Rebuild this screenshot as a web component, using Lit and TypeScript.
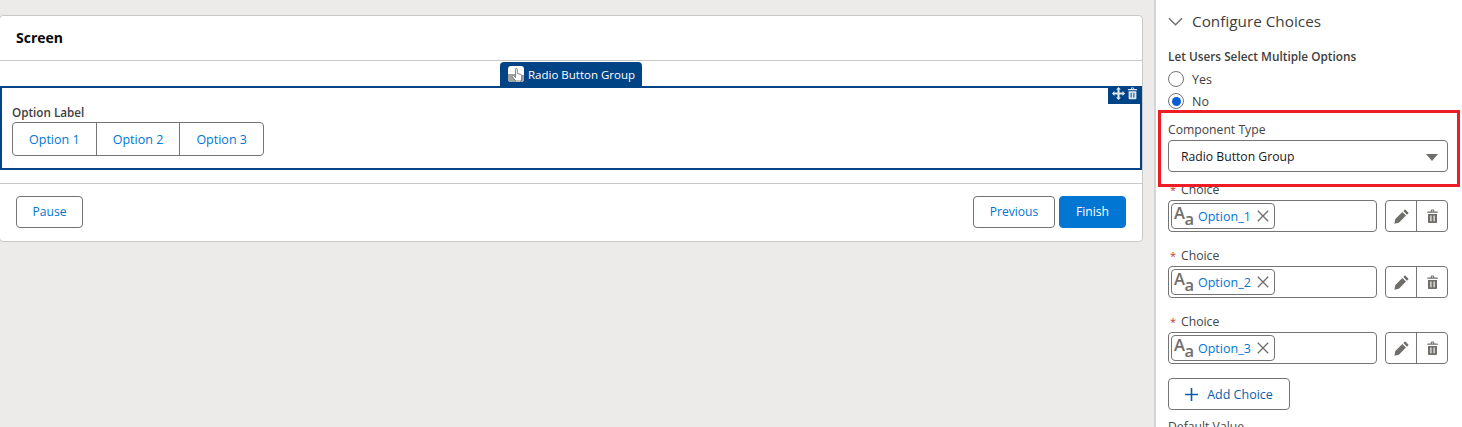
import { LitElement, html, css, svg } from 'lit';
import { customElement } from 'lit/decorators.js';

const trash = (fill: string) => svg`<path fill=${fill} d="M3 2.6h3.2V1.4c0-.5.4-.9.9-.9h1.8c.5 0 .9.4.9.9v1.2H13c.4 0 .7.3.7.7v.7H2.3v-.7c0-.4.3-.7.7-.7zM7.3 1.6v1h1.4v-1zM3.2 5.2h9.6v8.6c0 .7-.5 1.2-1.2 1.2H4.400c-.7 0-1.200-.5-1.200-1.200zM5.700 7v6h1.200V7zm3.400 0v6h1.200V7z"/>`;

@customElement('app-root')
export class AppRoot extends LitElement {
  static styles = css`
    :host {
      display: block;
      height: 427px;
      overflow: hidden;
      font-family: 'Open Sans', 'Noto Sans', sans-serif;
      font-size: 12.5px;
      color: #3e3e3c;
    }

    .page {
      display: flex;
      height: 427px;
      background: #ecebea;
    }

    .main {
      flex: none;
      width: 1154px;
      padding-top: 15px;
      box-sizing: border-box;
    }

    .card {
      margin: 0 11px 0 -1px;
      height: 227px;
      box-sizing: border-box;
      background: #fff;
      border: 1px solid #c9c9c9;
      border-radius: 4px;
      display: flex;
      flex-direction: column;
    }

    .card__header {
      height: 45px;
      flex: none;
      box-sizing: border-box;
      padding: 0 0 1px 16px;
      display: flex;
      align-items: center;
      font-size: 14px;
      font-weight: 700;
      color: #080707;
      border-bottom: 1px solid #c9c9c9;
    }

    .canvas {
      position: relative;
      height: 123px;
      flex: none;
      box-sizing: border-box;
      padding-top: 25px;
      border-bottom: 1px solid #c9c9c9;
    }

    .tab {
      position: absolute;
      left: 500px;
      top: 1px;
      width: 142px;
      height: 24px;
      box-sizing: border-box;
      padding-left: 8px;
      display: flex;
      align-items: center;
      gap: 4px;
      background: #014486;
      border-radius: 4px 4px 0 0;
      color: #fff;
      font-size: 11.5px;
      white-space: nowrap;
    }

    .tab svg {
      flex: none;
      width: 16px;
      height: 16px;
      border-radius: 3px;
    }

    .selected {
      position: relative;
      height: 84px;
      box-sizing: border-box;
      border: 2px solid #014486;
      padding: 15px 0 0 10px;
    }

    .toolbar {
      position: absolute;
      top: -2px;
      right: -2px;
      width: 34px;
      height: 18px;
      background: #014486;
      display: flex;
      align-items: flex-start;
      justify-content: center;
      gap: 1px;
      padding-top: 1px;
      box-sizing: border-box;
    }

    .toolbar svg {
      width: 13px;
      height: 13px;
    }

    .option-label {
      font-weight: 600;
      font-size: 11.7px;
      line-height: 18px;
      height: 19px;
    }

    .segments {
      display: flex;
      width: 252px;
      height: 34px;
      box-sizing: border-box;
      border: 1px solid #747474;
      border-radius: 4px;
    }

    .segments span {
      flex: 1;
      display: flex;
      align-items: center;
      justify-content: center;
      color: #0176d3;
    }

    .segments span + span {
      border-left: 1px solid #747474;
    }

    .card__footer {
      flex: 1;
      display: flex;
      align-items: center;
      padding: 0 16px 2px;
      gap: 4px;
    }

    .btn {
      height: 32px;
      box-sizing: border-box;
      display: inline-flex;
      align-items: center;
      justify-content: center;
      border: 1px solid #747474;
      border-radius: 4px;
      background: #fff;
      color: #0176d3;
      font-size: 12.1px;
    }

    .btn--pause {
      width: 67px;
      margin-right: auto;
    }

    .btn--prev {
      width: 82px;
    }

    .btn--finish {
      width: 67px;
      background: #0176d3;
      border-color: #0176d3;
      color: #fff;
    }

    .panel {
      flex: 1;
      background: #fff;
      border-left: 2px solid #d4d4d4;
      padding: 0 14px 0 12px;
      box-sizing: border-box;
      min-width: 0;
    }

    .section {
      height: 42px;
      display: flex;
      align-items: center;
      gap: 9px;
      font-size: 15.3px;
      color: #3e3e3c;
    }

    .section svg {
      width: 15px;
      height: 15px;
      flex: none;
    }

    .multi-label {
      font-size: 11.8px;
      font-weight: 600;
      line-height: 18px;
      margin: 5px 0 3px;
    }

    .radio {
      display: flex;
      align-items: center;
      gap: 8px;
      height: 22px;
    }

    .radio i {
      width: 16px;
      height: 16px;
      box-sizing: border-box;
      border: 1px solid #747474;
      border-radius: 50%;
      display: flex;
      align-items: center;
      justify-content: center;
    }

    .radio i.on::after {
      content: '';
      width: 9px;
      height: 9px;
      border-radius: 50%;
      background: #0b5cd5;
    }

    .highlight {
      position: relative;
      margin-top: 7px;
      height: 53px;
    }

    .highlight__frame {
      position: absolute;
      left: -10px;
      right: -12px;
      top: -9px;
      bottom: -15px;
      border: 3px solid #ee1c25;
      pointer-events: none;
    }

    .field-label {
      line-height: 22px;
      height: 21px;
      color: #444;
      font-size: 12.2px;
    }

    .select {
      height: 32px;
      box-sizing: border-box;
      border: 1px solid #747474;
      border-radius: 4px;
      padding: 0 9px 0 12px;
      display: flex;
      align-items: center;
      justify-content: space-between;
      color: #181818;
      font-size: 12.2px;
    }

    .select b {
      width: 0;
      height: 0;
      border-left: 6px solid transparent;
      border-right: 6px solid transparent;
      border-top: 7px solid #706e6b;
      margin-top: 2px;
    }

    .choices {
      margin-top: 9px;
    }

    .choice {
      height: 66px;
    }

    .choice__label {
      line-height: 18px;
      height: 18px;
      padding-left: 2px;
      color: #444;
      margin-bottom: 1px;
      font-size: 12.2px;
    }

    .choice__label em {
      color: #c23934;
      font-style: normal;
      font-size: 11px;
      margin-right: 5px;
    }

    .choice__row {
      display: flex;
      gap: 8px;
    }

    .pick {
      width: 209px;
      height: 32px;
      box-sizing: border-box;
      border: 1px solid #747474;
      border-radius: 4px;
      padding: 2px;
    }

    .pill {
      width: 104px;
      height: 26px;
      box-sizing: border-box;
      border: 1px solid #747474;
      border-radius: 4px;
      display: flex;
      align-items: center;
      color: #0176d3;
    }

    .pill__aa {
      flex: none;
      width: 26px;
      height: 24px;
      overflow: visible;
    }

    .pill__aa text {
      font-family: 'Open Sans', sans-serif;
      font-weight: 600;
      fill: #706e6b;
    }

    .pill__x {
      flex: none;
      width: 12px;
      height: 12px;
      margin-left: auto;
      margin-right: 5px;
    }

    .icons {
      display: flex;
      width: 63px;
      height: 32px;
      box-sizing: border-box;
      border: 1px solid #747474;
      border-radius: 4px;
    }

    .icons span {
      flex: 1;
      display: flex;
      align-items: center;
      justify-content: center;
    }

    .icons span + span {
      border-left: 1px solid #747474;
    }

    .icons svg {
      width: 15px;
      height: 15px;
    }

    .add {
      width: 122px;
      height: 32px;
      box-sizing: border-box;
      margin-top: -1px;
      border: 1px solid #747474;
      border-radius: 4px;
      display: flex;
      align-items: center;
      justify-content: center;
      gap: 9px;
      color: #0b5cab;
    }

    .add svg {
      width: 13px;
      height: 13px;
    }

    .default-label {
      margin-top: 8px;
      line-height: 18px;
      color: #444;
      font-size: 12.2px;
    }
  `;

  renderChoice(name: string) {
    return html`
      <div class="choice">
        <div class="choice__label"><em>*</em>Choice</div>
        <div class="choice__row">
          <div class="pick">
            <div class="pill">
              <svg class="pill__aa" viewBox="0 0 26 24">
                <text x="2" y="15" font-size="16.500">A</text>
                <text x="12.500" y="20.500" font-size="16.500">a</text>
              </svg>
              <span>${name}</span>
              <svg class="pill__x" viewBox="0 0 12 12">
                <path d="M.8.8l10.400 10.400M11.200.8L.8 11.200" stroke="#706e6b" stroke-width="1.300" fill="none" />
              </svg>
            </div>
          </div>
          <div class="icons">
            <span>
              <svg viewBox="0 0 16 16">
                <path fill="#706e6b" d="M12.300.8l2.900 2.900c.3.3.3.7 0 1l-1.400 1.400-3.900-3.900L11.300.8c.3-.3.7-.3 1 0zM8.900 3.100l3.900 3.900-7.600 7.600-4.800 1 1-4.900z" />
              </svg>
            </span>
            <span><svg viewBox="0 0 16 16">${trash('#706e6b')}</svg></span>
          </div>
        </div>
      </div>
    `;
  }

  render() {
    return html`
      <div class="page">
        <div class="main">
          <div class="card">
            <div class="card__header">Screen</div>
            <div class="canvas">
              <div class="tab">
                <svg viewBox="0 0 16 16">
                  <rect width="16" height="16" fill="#fff" />
                  <path fill="#a3a3a3" d="M0 8h8v8H0zM12 9h4v7h-4z" />
                  <path fill="#fff" stroke="#6b6b6b" stroke-width=".8" d="M7.500 3.200c0-1.100 1.800-1.100 1.800 0v4.300l3.500.8c.7.200 1.100.7 1 1.400l-.5 5.300H7.800l-3.500-4.300c-.6-.8.500-1.700 1.200-1l2 1.800z" />
                </svg>
                <span>Radio Button Group</span>
              </div>
              <div class="selected">
                <div class="toolbar">
                  <svg viewBox="0 0 16 16">
                    <path fill="#dfe8f2" d="M8 0l3 3H9.300v3.700H13V5l3 3-3 3V9.300H9.300V13H11l-3 3-3-3h1.700V9.300H3V11L0 8l3-3v1.700h3.700V3H5z" />
                  </svg>
                  <svg viewBox="0 0 16 16">${trash('#dfe8f2')}</svg>
                </div>
                <div class="option-label">Option Label</div>
                <div class="segments">
                  <span>Option 1</span>
                  <span>Option 2</span>
                  <span>Option 3</span>
                </div>
              </div>
            </div>
            <div class="card__footer">
              <div class="btn btn--pause">Pause</div>
              <div class="btn btn--prev">Previous</div>
              <div class="btn btn--finish">Finish</div>
            </div>
          </div>
        </div>
        <div class="panel">
          <div class="section">
            <svg viewBox="0 0 16 16">
              <path d="M1 4.500l7 7 7-7" stroke="#706e6b" stroke-width="1.500" fill="none" />
            </svg>
            Configure Choices
          </div>
          <div class="multi-label">Let Users Select Multiple Options</div>
          <div class="radio"><i></i>Yes</div>
          <div class="radio"><i class="on"></i>No</div>
          <div class="highlight">
            <div class="field-label">Component Type</div>
            <div class="select">Radio Button Group<b></b></div>
            <div class="highlight__frame"></div>
          </div>
          <div class="choices">
            ${this.renderChoice('Option_1')}
            ${this.renderChoice('Option_2')}
            ${this.renderChoice('Option_3')}
          </div>
          <div class="add">
            <svg viewBox="0 0 13 13">
              <path d="M6.500 0v13M0 6.500h13" stroke="#0b5cab" stroke-width="1.600" />
            </svg>
            Add Choice
          </div>
          <div class="default-label">Default Value</div>
        </div>
      </div>
    `;
  }
}
